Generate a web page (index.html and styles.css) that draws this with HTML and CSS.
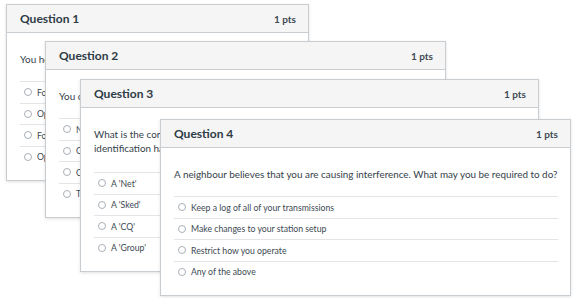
FILE: index.html
```html
<!DOCTYPE html>
<html lang="en">
<head>
  <meta charset="UTF-8">
  <title>Quiz Questions</title>
  <link rel="stylesheet" href="styles.css">
</head>
<body>

  <div class="stack">

    <!-- Question 1 -->
    <div class="question q1">
      <div class="question-header">
        <span class="question-title">Question 1</span>
        <span class="question-pts">1 pts</span>
      </div>
      <div class="question-body">
        <p class="question-text">You hear a station calling on your frequency. What do you do?</p>
        <ul class="answers">
          <li><span class="radio"></span>Follow on after them</li>
          <li><span class="radio"></span>Operate on another frequency</li>
          <li><span class="radio"></span>Force them to move</li>
          <li><span class="radio"></span>Operate over the top of them</li>
        </ul>
      </div>
    </div>

    <!-- Question 2 -->
    <div class="question q2">
      <div class="question-header">
        <span class="question-title">Question 2</span>
        <span class="question-pts">1 pts</span>
      </div>
      <div class="question-body">
        <p class="question-text">You call CQ. How often should you identify your station?</p>
        <ul class="answers">
          <li><span class="radio"></span>Never</li>
          <li><span class="radio"></span>Greater than every hour</li>
          <li><span class="radio"></span>Constantly</li>
          <li><span class="radio"></span>The start and end of each contact</li>
        </ul>
      </div>
    </div>

    <!-- Question 3 -->
    <div class="question q3">
      <div class="question-header">
        <span class="question-title">Question 3</span>
        <span class="question-pts">1 pts</span>
      </div>
      <div class="question-body">
        <p class="question-text tall">What is the correct term for a contact arranged in advance between two stations, with<br>identification handled at a set time?</p>
        <ul class="answers">
          <li><span class="radio"></span>A 'Net'</li>
          <li><span class="radio"></span>A 'Sked'</li>
          <li><span class="radio"></span>A 'CQ'</li>
          <li><span class="radio"></span>A 'Group'</li>
        </ul>
      </div>
    </div>

    <!-- Question 4 -->
    <div class="question q4">
      <div class="question-header">
        <span class="question-title">Question 4</span>
        <span class="question-pts">1 pts</span>
      </div>
      <div class="question-body">
        <p class="question-text">A neighbour believes that you are causing interference. What may you be required to do?</p>
        <ul class="answers">
          <li><span class="radio"></span>Keep a log of all of your transmissions</li>
          <li><span class="radio"></span>Make changes to your station setup</li>
          <li><span class="radio"></span>Restrict how you operate</li>
          <li><span class="radio"></span>Any of the above</li>
        </ul>
      </div>
    </div>

  </div>

</body>
</html>
```

FILE: styles.css
```css
body {
  margin: 0;
  padding: 0;
  background-color: #ffffff;
  font-family: 'Lato', 'Liberation Sans', sans-serif;
  color: #2d3b45;
}

/* Pilha de cartões sobrepostos */
.stack {
  position: relative;
  width: 575px;
  height: 298px;
  overflow: hidden;
}

.question {
  position: absolute;
  background-color: #ffffff;
  border: 1px solid #c7cdd1;
  box-shadow: 0 1px 3px rgba(0, 0, 0, 0.12);
}

.q1 { left: 6px;   top: 4px;   width: 301px; }
.q2 { left: 45px;  top: 41px;  width: 399px; }
.q3 { left: 80px;  top: 79px;  width: 457px; }
.q4 { left: 160px; top: 119px; width: 409px; }

/* Cabeçalho do cartão */
.question-header {
  display: flex;
  justify-content: space-between;
  align-items: center;
  height: 27px;
  padding: 0 12px 0 13px;
  background-color: #f5f5f5;
  border-bottom: 1px solid #c7cdd1;
}

.question-title {
  font-size: 12px;
  font-weight: bold;
}

.question-pts {
  font-size: 10px;
  font-weight: bold;
  color: #3d4a53;
}

/* Corpo do cartão */
.question-body {
  padding: 19px 12px 13px 13px;
}

.question-text {
  margin: 0 0 15px;
  font-size: 9.9px;
  line-height: 14px;
  color: #34414a;
}

.question-text.tall {
  margin-bottom: 17px;
}

.answers {
  list-style: none;
  margin: 0;
  padding: 0;
}

.answers li {
  display: flex;
  align-items: center;
  height: 20.5px;
  border-top: 1px solid #e2e5e7;
  font-size: 8.7px;
  color: #3d4a53;
}

.radio {
  width: 8px;
  height: 8px;
  margin: 0 5px 0 4px;
  border: 1px solid #a8b0b6;
  border-radius: 50%;
  box-sizing: border-box;
  background-color: #ffffff;
}
```
